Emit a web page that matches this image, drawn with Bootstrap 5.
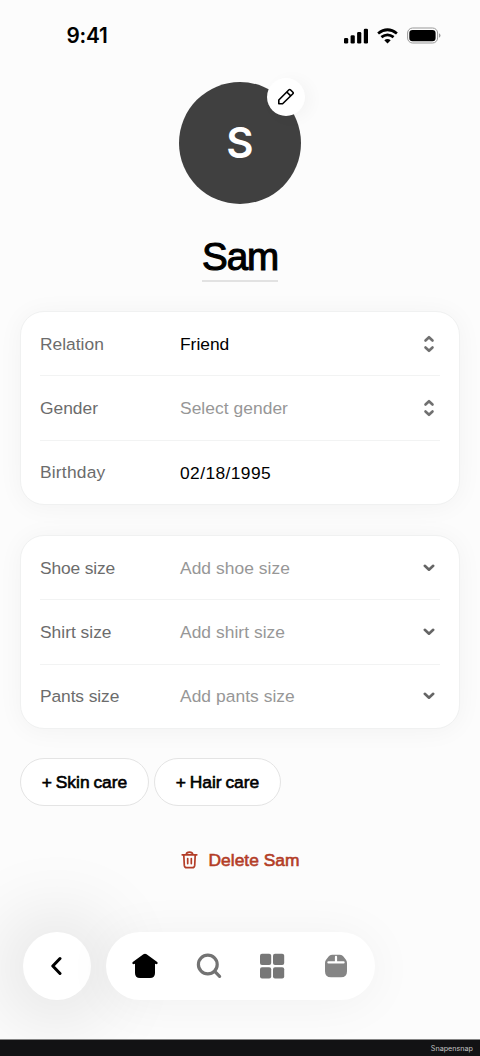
<!DOCTYPE html>
<html lang="en">
<head>
<meta charset="utf-8">
<meta name="viewport" content="width=device-width, initial-scale=1">
<title>Sam</title>
<link href="https://cdn.jsdelivr.net/npm/bootstrap@5.3.0/dist/css/bootstrap.min.css" rel="stylesheet">
<style>
body{font-family:"Liberation Sans",Arial,sans-serif;font-size:17.4px;line-height:24px;color:#000;background:#fcfcfc}
svg{display:block;flex:none}
.phone{height:1056px;background:#fcfcfc}
.status-bar{height:71px;padding:0 39px 0 66.500px}
.clock{font:600 20.8px/24px Inter,sans-serif;letter-spacing:-.2px}
.avatar{width:122px;height:122px;margin-top:11px;background:#404040;color:#fff;font:600 42px/1 Inter,sans-serif}
.edit-btn{width:38px;height:38px;top:-4px;right:-4px;background:#fff;box-shadow:6px 2px 16px rgba(0,0,0,.035)}
.person-name{font-size:38.6px;line-height:46px;letter-spacing:-1.1px;-webkit-text-stroke:1.1px #000;margin-top:30px;border-bottom:2px solid #e2e2e2;height:48px;width:76px}
.form-card{margin:0 20px;padding:0 19px;height:194px;background:#fff;border:1px solid #f0f1f1;border-radius:24px;box-shadow:0 2px 26px rgba(0,0,0,.045)}
.form-card .field{flex:1 1 0;padding-right:5.500px}
.form-card .field+.field{border-top:1px solid #f2f3f3}
.field-label{width:140px;color:#6c6c6c}
.hint{color:#979797;letter-spacing:.05px}
.digits{letter-spacing:.4px;padding-top:1px}
.care-btn{height:48px;padding:0;border:1px solid #e4e4e4;background:#fff;color:#000;word-spacing:-1px}
.semi{-webkit-text-stroke:.6px currentColor}
.danger-text{color:#b33d27}
.dock{padding:0 23px;gap:15px}
.back-btn{width:68px;height:68px;background:#fff;box-shadow:0 2px 80px 16px rgba(0,0,0,.12)}
.tabs-pill{width:269px;height:68px;background:#fff;box-shadow:0 3px 50px rgba(0,0,0,.05)}
.tabs-pill .tab{width:63.5px}
.footer-strip{height:17px;background:#121214;border-top:1px solid #858585;color:#c4c4c4;font:7.2px/18px Inter,sans-serif;padding-right:7px;position:relative}
</style>
</head>
<body>
<div class="phone d-flex flex-column overflow-hidden">
  <header class="status-bar d-flex align-items-center justify-content-between">
    <span class="clock">9:41</span>
    <div class="d-flex align-items-center">
      <svg width="25" height="16" viewBox="0 0 25 16"><rect x="0" y="10" width="4.2" height="5.5" rx="1.3"/><rect x="6.6" y="7.3" width="4.2" height="8.2" rx="1.3"/><rect x="13.1" y="4" width="4.2" height="11.5" rx="1.3"/><rect x="19.8" y=".7" width="4.2" height="14.8" rx="1.3"/></svg>
      <svg class="ms-2" width="21" height="16" viewBox="0 0 21 16" fill="none" stroke="#000" stroke-width="2.8"><path d="M1.1 5.5Q10.5-2 19.9 5.5M4.4 9.2q6.1-4.7 12.2 0"/><path d="M10.5 15.6 7.3 12.2q3.2-2.5 6.4 0z" fill="#000" stroke="none"/></svg>
      <svg style="margin-left:9px" width="34" height="17" viewBox="0 0 34 17"><rect x=".6" y="1" width="30" height="15" rx="5" fill="none" stroke="#999" stroke-width="1"/><rect x="2.3" y="2.9" width="26.3" height="11.3" rx="3.2"/><path d="M32 6.3q1.5.7 1.5 2.2T32 10.8z" fill="#999"/></svg>
    </div>
  </header>

  <div class="avatar rounded-circle align-self-center d-flex align-items-center justify-content-center position-relative flex-shrink-0">
    S
    <button class="edit-btn btn p-0 border-0 rounded-circle position-absolute d-flex align-items-center justify-content-center" aria-label="Edit">
      <svg width="20" height="20" viewBox="0 0 20 20" fill="none" stroke="#000" stroke-width="1.6" stroke-linejoin="round"><path d="M2.800 16.800V13L13 2.800q.7-.7 1.4 0l2.500 2.500q.7.7 0 1.4L6.600 16.800zM10.800 5l3.900 3.900"/></svg>
    </button>
  </div>
  <h1 class="person-name fw-normal text-center align-self-center mb-0 flex-shrink-0 text-nowrap">Sam</h1>

  <section class="form-card d-flex flex-column flex-shrink-0" style="margin-top:29px">
    <div class="field d-flex align-items-center"><span class="field-label">Relation</span><span>Friend</span>
      <svg class="ms-auto" width="12" height="18" viewBox="0 0 12 18" fill="none" stroke="#707070" stroke-width="2.6" stroke-linecap="round" stroke-linejoin="round"><path d="M2.500 5.500 6 2.200l3.500 3.300M2.500 12.500 6 15.800l3.500-3.300"/></svg></div>
    <div class="field d-flex align-items-center"><span class="field-label">Gender</span><span class="hint">Select gender</span>
      <svg class="ms-auto" width="12" height="18" viewBox="0 0 12 18" fill="none" stroke="#707070" stroke-width="2.6" stroke-linecap="round" stroke-linejoin="round"><path d="M2.500 5.500 6 2.200l3.500 3.300M2.500 12.500 6 15.800l3.500-3.300"/></svg></div>
    <div class="field d-flex align-items-center"><span class="field-label" style="letter-spacing:.2px">Birthday</span><span class="digits">02/18/1995</span></div>
  </section>

  <section class="form-card d-flex flex-column flex-shrink-0" style="margin-top:30px">
    <div class="field d-flex align-items-center"><span class="field-label" style="letter-spacing:-.15px">Shoe size</span><span class="hint">Add shoe size</span>
      <svg class="ms-auto" width="12" height="8" viewBox="0 0 12 8" fill="none" stroke="#656565" stroke-width="2.6" stroke-linecap="round" stroke-linejoin="round"><path d="m1.8 1.800 4.200 3.900 4.200-3.900"/></svg></div>
    <div class="field d-flex align-items-center"><span class="field-label">Shirt size</span><span class="hint">Add shirt size</span>
      <svg class="ms-auto" width="12" height="8" viewBox="0 0 12 8" fill="none" stroke="#656565" stroke-width="2.6" stroke-linecap="round" stroke-linejoin="round"><path d="m1.8 1.800 4.200 3.900 4.200-3.900"/></svg></div>
    <div class="field d-flex align-items-center"><span class="field-label" style="letter-spacing:-.1px">Pants size</span><span class="hint">Add pants size</span>
      <svg class="ms-auto" width="12" height="8" viewBox="0 0 12 8" fill="none" stroke="#656565" stroke-width="2.6" stroke-linecap="round" stroke-linejoin="round"><path d="m1.8 1.800 4.200 3.900 4.200-3.900"/></svg></div>
  </section>

  <div class="d-flex flex-shrink-0" style="margin:29px 20px 0;gap:5px">
    <button class="care-btn semi rounded-pill text-nowrap" style="width:129px">+ Skin care</button>
    <button class="care-btn semi rounded-pill text-nowrap" style="width:127px">+ Hair care</button>
  </div>

  <div class="danger-text d-flex align-items-center justify-content-center flex-shrink-0" style="margin-top:42px;gap:11px">
    <svg width="17" height="18" viewBox="0 0 17 18" fill="none" stroke="currentColor" stroke-width="1.7" stroke-linecap="round" stroke-linejoin="round"><path d="M1.2 3.8h14.6M5.2 3.5Q5.5 1.2 8.5 1.2t3.3 2.3M2.8 4.2l.5 10.2q.2 2.3 2.4 2.3h5.6q2.2 0 2.4-2.3l.5-10.2M6.7 7.6v5M10.3 7.6v5"/></svg>
    <span class="semi">Delete Sam</span>
  </div>

  <nav class="dock d-flex flex-shrink-0" style="margin-top:60px">
    <button class="back-btn btn border-0 p-0 rounded-circle d-flex align-items-center justify-content-center flex-shrink-0" aria-label="Back">
      <svg width="12" height="20" viewBox="0 0 12 20" fill="none" stroke="#000" stroke-width="3" stroke-linecap="round" stroke-linejoin="round"><path d="M9 2.500 1.800 10 9 17.500"/></svg>
    </button>
    <div class="tabs-pill rounded-pill d-flex align-items-center justify-content-center position-relative flex-shrink-0">
      <span class="tab d-flex justify-content-center"><svg width="28" height="26" viewBox="0 0 28 26"><path d="M12.4 1.3q1.600-1 3.200 0L26.2 9q1 .9.2 1.800-.7.7-2.400 0V20q0 5-5 5H9q-5 0-5-5V10.8q-1.700.7-2.400 0Q.8 9.900 1.800 9z"/></svg></span>
      <span class="tab d-flex justify-content-center"><svg width="26" height="26" viewBox="0 0 26 26" fill="none" stroke="#737373" stroke-width="3.2" stroke-linecap="round"><circle cx="11.8" cy="11.5" r="9.4"/><path d="m18.7 18.4 4.900 4.900"/></svg></span>
      <span class="tab d-flex justify-content-center"><svg width="26" height="26" viewBox="0 0 26 26" fill="#777"><rect x="1" y=".8" width="11.200" height="11.200" rx="2"/><rect x="14" y=".8" width="11.200" height="11.200" rx="2"/><rect x="1" y="14.200" width="11.200" height="11.200" rx="2"/><rect x="14" y="14.200" width="11.200" height="11.200" rx="2"/></svg></span>
      <span class="tab d-flex justify-content-center"><svg width="24" height="24" viewBox="0 0 24 24"><path fill="#858585" d="M8 .8h8q2.200 0 3.400 1.700l2.500 3.300Q23 7.300 23 9v8.300q0 6-6 6H7q-6 0-6-6V9q0-1.700 1.100-3.200l2.500-3.300Q5.800.8 8 .8z"/><path stroke="#fff" stroke-width="2.200" stroke-linecap="round" fill="none" d="M4.400 8.400h15.200M12 2.800v5.600"/></svg></span>
    </div>
  </nav>
  <footer class="footer-strip mt-auto text-end flex-shrink-0">Snapensnap</footer>
</div>
<script src="https://cdn.jsdelivr.net/npm/bootstrap@5.3.0/dist/js/bootstrap.bundle.min.js"></script>
</body>
</html>
